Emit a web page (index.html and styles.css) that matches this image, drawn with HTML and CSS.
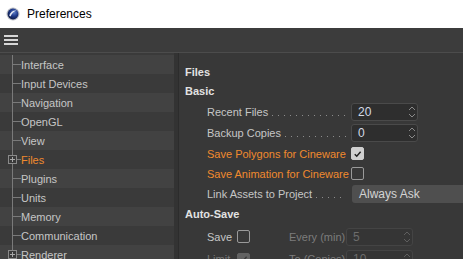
FILE: index.html
```html
<!DOCTYPE html>
<html>
<head>
    <title>Preferences</title>
    <link rel="stylesheet" href="styles.css">
</head>
<body>
    <div class="titlebar">
        <svg class="app-icon" width="14" height="14" viewBox="0 0 14 14">
            <defs>
                <radialGradient id="ball" cx="0.6" cy="0.35" r="0.7">
                    <stop offset="0" stop-color="#5f7fc8"/>
                    <stop offset="0.5" stop-color="#1f3a8a"/>
                    <stop offset="1" stop-color="#0b1740"/>
                </radialGradient>
            </defs>
            <circle cx="7" cy="7" r="6.5" fill="#b9bcc4"/>
            <circle cx="7" cy="7" r="5.4" fill="url(#ball)"/>
            <path d="M3.2 8.6 C4.2 5.2 7.4 3.2 10.6 3.6 C8.2 4.4 5.8 6.2 4.6 9.6 Z" fill="#e6e9f2"/>
        </svg>
        <span class="title">Preferences</span>
    </div>

    <div class="toolbar">
        <span class="menu-icon"><i></i><i></i><i></i></span>
    </div>

    <div class="main">
        <ul class="tree">
            <li class="node"><span class="twig"></span>Interface</li>
            <li class="node"><span class="twig"></span>Input Devices</li>
            <li class="node"><span class="twig"></span>Navigation</li>
            <li class="node"><span class="twig"></span>OpenGL</li>
            <li class="node"><span class="twig"></span>View</li>
            <li class="node active"><span class="twig"><span class="expander"></span></span>Files</li>
            <li class="node"><span class="twig"></span>Plugins</li>
            <li class="node"><span class="twig"></span>Units</li>
            <li class="node"><span class="twig"></span>Memory</li>
            <li class="node"><span class="twig"></span>Communication</li>
            <li class="node"><span class="twig"><span class="expander"></span></span>Renderer</li>
        </ul>

        <div class="splitter"></div>

        <div class="panel">
            <div class="group-title">Files</div>
            <div class="section-title">Basic</div>

            <div class="param h21">
                <span class="lbl">Recent Files<span class="leader"></span></span>
                <div class="spin">20<span class="arrows"><svg width="8" height="14" viewBox="0 0 8 14"><path d="M1 5 L4 2 L7 5 M1 9 L4 12 L7 9" fill="none" stroke="#8a8a8a" stroke-width="1"/></svg></span></div>
            </div>
            <div class="param h21">
                <span class="lbl">Backup Copies<span class="leader"></span></span>
                <div class="spin">0<span class="arrows"><svg width="8" height="14" viewBox="0 0 8 14"><path d="M1 5 L4 2 L7 5 M1 9 L4 12 L7 9" fill="none" stroke="#8a8a8a" stroke-width="1"/></svg></span></div>
            </div>
            <div class="param h21">
                <span class="lbl changed">Save Polygons for Cineware</span>
                <span class="check on"><svg width="12" height="12" viewBox="0 0 12 12"><path d="M3 6.2 L5.2 8.4 L9.4 3.6" fill="none" stroke="#1e1e1e" stroke-width="1.6"/></svg></span>
            </div>
            <div class="param h19">
                <span class="lbl changed">Save Animation for Cineware</span>
                <span class="check"></span>
            </div>
            <div class="param h22">
                <span class="lbl">Link Assets to Project<span class="leader"></span></span>
                <div class="dropdown">Always Ask</div>
            </div>

            <div class="section-title">Auto-Save</div>

            <div class="auto-row h25">
                <span class="auto-lbl">Save</span>
                <span class="check"></span>
                <span class="sub-lbl">Every (min)</span>
                <div class="spin disabled">5<span class="arrows"><svg width="8" height="14" viewBox="0 0 8 14"><path d="M1 5 L4 2 L7 5 M1 9 L4 12 L7 9" fill="none" stroke="#5e5e5e" stroke-width="1"/></svg></span></div>
            </div>
            <div class="auto-row h20">
                <span class="auto-lbl dim">Limit</span>
                <span class="check on disabled"><svg width="12" height="12" viewBox="0 0 12 12"><path d="M3 6.2 L5.2 8.4 L9.4 3.6" fill="none" stroke="#3a3a3a" stroke-width="1.6"/></svg></span>
                <span class="sub-lbl">To (Copies)</span>
                <div class="spin disabled">10<span class="arrows"><svg width="8" height="14" viewBox="0 0 8 14"><path d="M1 5 L4 2 L7 5 M1 9 L4 12 L7 9" fill="none" stroke="#5e5e5e" stroke-width="1"/></svg></span></div>
            </div>
        </div>
    </div>
</body>
</html>
```

FILE: styles.css
```css
html, body {
    margin: 0;
    padding: 0;
    width: 463px;
    height: 259px;
    overflow: hidden;
    background-color: #383838;
}

body {
    font-family: "Liberation Sans", Arial, sans-serif;
    font-size: 11px;
    color: #c6c6c6;
}

.titlebar {
    height: 28px;
    background-color: #ffffff;
    display: flex;
    align-items: center;
    padding-left: 6px;
    box-sizing: border-box;
}

.app-icon {
    margin-right: 7px;
}

.title {
    font-size: 12px;
    color: #000000;
}

.toolbar {
    height: 24px;
    background-color: #3c3c3c;
    border-bottom: 1px solid #4c4c4c;
    display: flex;
    align-items: center;
    padding-left: 4px;
}

.menu-icon {
    display: flex;
    flex-direction: column;
    gap: 2px;
    margin-top: -1px;
}

.menu-icon i {
    display: block;
    width: 14px;
    height: 2px;
    background-color: #d6d6d6;
}

.main {
    display: flex;
    height: 206px;
}

.tree {
    list-style: none;
    margin: 0;
    padding: 2px 0 0 0;
    width: 174px;
    background-color: #3a3a3a;
}

.node {
    height: 19px;
    display: flex;
    align-items: center;
    background-color: #3a3a3a;
}

.node:nth-child(odd) {
    background-color: #424242;
}

.node.active {
    color: #f08a2e;
}

.twig {
    width: 21px;
    height: 19px;
    display: flex;
    align-items: center;
    background-image: linear-gradient(#7a7a7a, #7a7a7a), linear-gradient(#7a7a7a, #7a7a7a);
    background-size: 1px 100%, 8px 1px;
    background-position: 12px 0, 13px 9px;
    background-repeat: no-repeat;
}

.expander {
    width: 7px;
    height: 7px;
    margin-left: 8px;
    border: 1px solid #8a8a8a;
    background-color: #3a3a3a;
    background-image: linear-gradient(#a8a8a8, #a8a8a8), linear-gradient(#a8a8a8, #a8a8a8);
    background-size: 5px 1px, 1px 5px;
    background-position: 1px 3px, 3px 1px;
    background-repeat: no-repeat;
}

.splitter {
    width: 4px;
    background-color: #333333;
    border-right: 1px solid #2c2c2c;
}

.panel {
    flex: 1;
    padding: 10px 0 0 6px;
    background-color: #383838;
}

.group-title,
.section-title {
    height: 19px;
    line-height: 19px;
    font-weight: bold;
    color: #e2e2e2;
}

.param {
    display: flex;
    align-items: center;
    padding-left: 22px;
}

.h19 { height: 19px; }
.h20 { height: 20px; }
.h21 { height: 21px; }
.h22 { height: 22px; }
.h25 { height: 25px; }

.lbl {
    width: 144px;
    display: flex;
    align-items: baseline;
    white-space: nowrap;
}

.lbl.changed {
    color: #f08a2e;
}

.leader {
    flex: 1;
    height: 1px;
    margin: 0 5px 0 4px;
    background-image: linear-gradient(to right, #8c8c8c 1px, transparent 1px);
    background-size: 6px 1px;
    background-repeat: repeat-x;
}

.spin {
    width: 59px;
    height: 16px;
    border: 1px solid #4a4a4a;
    border-radius: 3px;
    background-color: #2e2e2e;
    color: #d4dbe6;
    display: flex;
    align-items: center;
    justify-content: space-between;
    padding-left: 6px;
    box-sizing: content-box;
    font-size: 12px;
}

.spin .arrows {
    display: flex;
    align-items: center;
    padding-right: 1px;
}

.spin.disabled {
    background-color: #353535;
    border-color: #444444;
    color: #6c6c6c;
}

.check {
    width: 11px;
    height: 11px;
    border: 1px solid #9a9a9a;
    border-radius: 2px;
    display: flex;
    align-items: center;
    justify-content: center;
}

.check.on {
    background-color: #cfcfcf;
    border-color: #cfcfcf;
}

.check.on.disabled {
    background-color: #626262;
    border-color: #626262;
}

.dropdown {
    flex: 1;
    height: 18px;
    line-height: 18px;
    margin-left: 1px;
    padding-left: 7px;
    background-color: #4f4f4f;
    border-radius: 3px 0 0 3px;
    color: #d4d4d4;
    font-size: 12px;
}

.auto-row {
    display: flex;
    align-items: center;
    padding-left: 22px;
}

.auto-lbl {
    width: 30px;
}

.auto-lbl.dim {
    color: #7a7a7a;
}

.sub-lbl {
    width: 57px;
    margin-left: 39px;
    color: #7c7c7c;
    white-space: nowrap;
}
```
